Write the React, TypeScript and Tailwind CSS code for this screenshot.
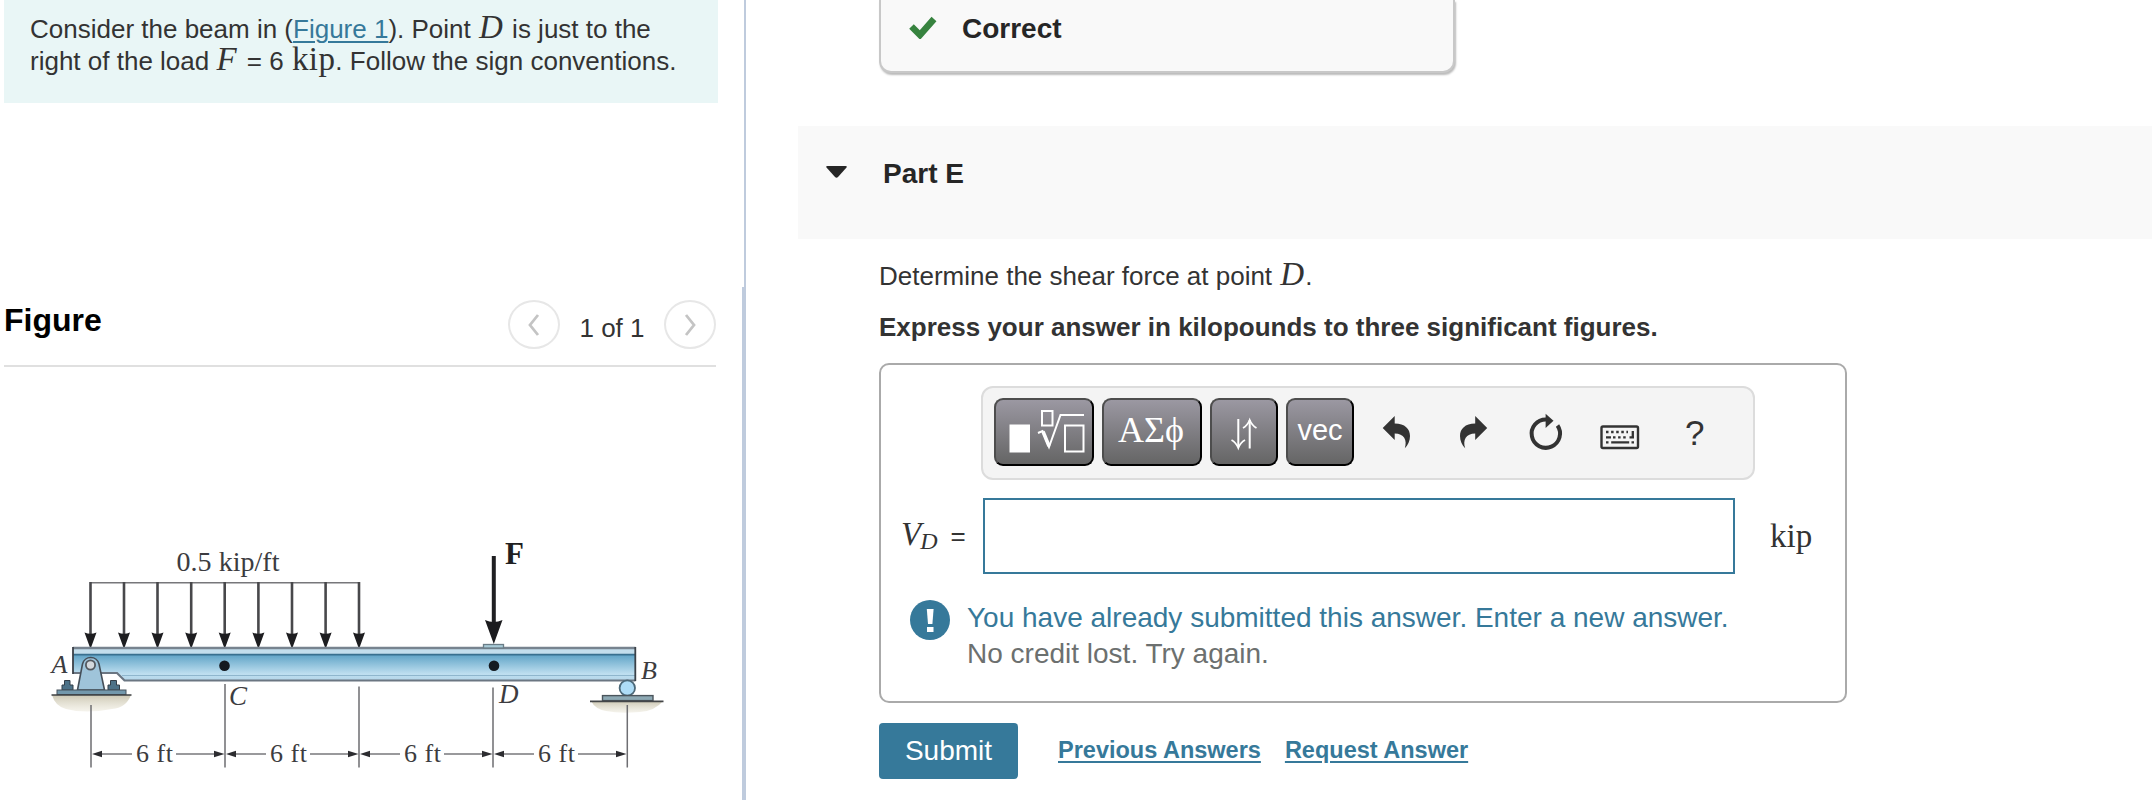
import React, { useState } from 'react';

const LOAD_ARROWS = [90.5, 124, 157.5, 191.2, 224.7, 258.4, 292, 325.6, 359];
const DIMENSIONS = [91, 225, 359, 493];

const MathText: React.FC<{ children: React.ReactNode; className?: string }> = ({ children, className = '' }) => (
  <span className={`font-['Liberation_Serif',serif] leading-[0] ${className}`}>{children}</span>
);

const BeamFigure: React.FC = () => (
  <svg
    width="700"
    height="270"
    viewBox="0 520 700 270"
    className="block font-['Liberation_Serif',serif]"
    fill="#3c3c40"
    fontSize="26"
  >
    <defs>
      <linearGradient id="web" x1="0" y1="0" x2="0" y2="1">
        <stop offset="0" stopColor="#5fa3c6" />
        <stop offset="0.75" stopColor="#bfdff0" />
        <stop offset="1" stopColor="#b4d6e9" />
      </linearGradient>
      <linearGradient id="ground" x1="0" y1="0" x2="0" y2="1">
        <stop offset="0" stopColor="#cdc8b4" />
        <stop offset="1" stopColor="#efece0" stopOpacity="0.6" />
      </linearGradient>
    </defs>

    {/* distributed load */}
    <text x="176.5" y="571" fontSize="28" textLength="103" lengthAdjust="spacing">0.5 kip/ft</text>
    <path d="M90.5 582.7H359" stroke="#77777a" strokeWidth="1.6" />
    {LOAD_ARROWS.map(x => (
      <g key={x}>
        <path d={`M${x} 582V636`} stroke="#48484b" strokeWidth="2.6" />
        <path d={`M${x - 6} 632.5Q${x} 635 ${x + 6} 632.5L${x} 649Z`} fill="#1d1d20" />
      </g>
    ))}

    {/* beam */}
    <path d="M73 654.5H635.5V680.5H124.5L117 673H73Z" fill="url(#web)" />
    <rect x="73" y="648" width="562.5" height="6.5" fill="#c3deec" />
    <path d="M73 648H635.5" stroke="#77838f" strokeWidth="2.4" />
    <path d="M73 654.7H635.5" stroke="#39708f" strokeWidth="1.8" />
    <path d="M122 675.5H635.5" stroke="#8fb6cd" strokeWidth="1.2" />
    <path d="M73 673H117L124.5 680.5H635.5" fill="none" stroke="#6b7682" strokeWidth="2.2" />
    <path d="M73 647V674M635.3 647V681" stroke="#3b4148" strokeWidth="1.8" />
    <circle cx="224.5" cy="665.7" r="5.3" fill="#151a20" />
    <circle cx="494" cy="665.7" r="5.3" fill="#151a20" />

    {/* pin support at A */}
    <path d="M52 695H131Q126 708 112 709Q85 714 66 709Q55 706 52 695Z" fill="url(#ground)" />
    <path d="M62 690V685H64.5V680.5H70V685H73V690ZM108 690V685H110.5V680.5H116.5V685H119.5V690Z" fill="#4d7288" stroke="#333e48" />
    <path d="M77.5 690L82.5 664A8.5 8.5 0 0 1 99 664L104.5 690Z" fill="#9fc4da" stroke="#454f59" strokeWidth="1.6" />
    <circle cx="90.5" cy="665" r="4.6" fill="#d4d8dc" stroke="#53585e" strokeWidth="1.8" />
    <rect x="57" y="690" width="69" height="4.5" fill="#7398ac" stroke="#47535d" />
    <path d="M51.5 695H131.5" stroke="#3f4245" strokeWidth="1.6" />

    {/* roller support at B */}
    <path d="M591 701H663Q655 711 640 712Q620 714 606 711Q595 709 591 701Z" fill="url(#ground)" />
    <circle cx="627.3" cy="688" r="7.7" fill="#aedcf6" stroke="#4c6878" strokeWidth="1.8" />
    <rect x="602.5" y="695.6" width="50.5" height="5" fill="#8da9b4" stroke="#4b555c" strokeWidth="1.4" />
    <path d="M590 701.3H663.5" stroke="#444648" strokeWidth="1.8" />

    {/* point load */}
    <rect x="483.5" y="644.5" width="20" height="3.5" fill="#a9cbd8" stroke="#6a7d87" strokeWidth="1.3" />
    <path d="M493.8 556V624" stroke="#1f1f22" strokeWidth="4" />
    <path d="M485 620Q493.8 624 502.5 620L493.8 644Z" fill="#1b1b1e" />
    <text x="505" y="563.5" fontSize="31" fontWeight="bold" fill="#1f1f22">F</text>

    <g fontStyle="italic">
      <text x="51.5" y="673.3">A</text>
      <text x="229" y="704.5" fontSize="27">C</text>
      <text x="499" y="702.8" fontSize="27">D</text>
      <text x="641" y="679">B</text>
    </g>

    {/* dimension lines */}
    <path d="M91 705V767.5M225 684V767.5M359 686.5V767.5M493 687.5V767.5M627.3 705V767.5" stroke="#6e6e72" strokeWidth="1.5" />
    {DIMENSIONS.map(x => (
      <g key={x}>
        <path d={`M${x + 6} 754H${x + 41}M${x + 85} 754H${x + 128}`} stroke="#78787c" strokeWidth="1.4" />
        <path d={`M${x + 1} 754L${x + 11} 750.8V757.2ZM${x + 133.5} 754L${x + 123} 750.8V757.2Z`} fill="#2c2c30" />
        <text x={x + 45} y="762" textLength="37" lengthAdjust="spacing">6 ft</text>
      </g>
    ))}
  </svg>
);

const PagerButton: React.FC<{ label: string; path: string }> = ({ label, path }) => (
  <button aria-label={label} className="flex h-[49px] w-[52px] items-center justify-center rounded-[50%] border-2 border-[#e7e7e7]">
    <svg width="14" height="22" viewBox="0 0 14 22" fill="none" stroke="#c4c4c4" strokeWidth="2.8">
      <path d={path} />
    </svg>
  </button>
);

const ToolButton: React.FC<{ children: React.ReactNode; wide?: boolean }> = ({ children, wide }) => (
  <button
    className={`flex h-[68px] items-center justify-center rounded-[9px] border-2 border-t-[#4d4d4d] border-l-[#4d4d4d] border-r-black border-b-black bg-linear-to-b from-[#9b98a2] to-[#656565] text-white ${
      wide ? 'w-[100px]' : 'w-[68px]'
    }`}
  >
    {children}
  </button>
);

const Toolbar: React.FC = () => (
  <div className="ml-[100px] flex h-[94px] w-[774px] rounded-[12px] border-2 border-[#dcdcdc] bg-[#f4f4f4] pt-[10px] pl-[11px]">
    <div className="flex gap-2">
      <ToolButton wide>
        <svg width="96" height="64" viewBox="996 400 96 64" fill="none" stroke="#fff" strokeWidth="2" className="shrink-0">
          <rect x="1009.5" y="424.5" width="20.5" height="28" fill="#fff" stroke="none" />
          <rect x="1042" y="411" width="10.5" height="14.5" />
          <path d="M1038 433L1042.5 431L1049 447L1060.5 415H1084" />
          <path d="M1043 431.5L1049 446" strokeWidth="3.5" />
          <rect x="1065" y="425.5" width="18.5" height="26" />
        </svg>
      </ToolButton>
      <ToolButton wide>
        <span className="pb-[4px] pr-[2px] font-['Liberation_Serif',serif] text-[36px] leading-none">ΑΣϕ</span>
      </ToolButton>
      <ToolButton>
        <svg width="64" height="64" viewBox="1212 400 64 64" fill="none" stroke="#fff" strokeWidth="2" className="shrink-0">
          <path d="M1238.3 419V447M1249.7 448.5V420" />
          <path d="M1231.5 440Q1236 442.5 1238.3 448Q1240.5 442.5 1245 440M1243 428Q1247.5 425.5 1249.7 420Q1252 425.5 1256.5 428" strokeWidth="1.8" />
        </svg>
      </ToolButton>
      <ToolButton>
        <span className="pb-1 text-[29px] leading-none">vec</span>
      </ToolButton>
    </div>
    <svg width="360" height="68" viewBox="1362 398 360 68" className="ml-2" fill="#333">
      <path d="M1382.7 428L1394.7 416V423.5C1405 423.5 1410 429 1410 436C1410 441 1408 445 1404.8 448.3C1407.5 440 1404 433.5 1394.7 433.5V440Z" />
      <path d="M1487.2 428L1475.2 416V423.5C1465 423.5 1460 429 1460 436C1460 441 1462 445 1465.2 448.3C1462.5 440 1466 433.5 1475.2 433.5V440Z" />
      <path d="M1546 419.4A14.2 14.2 0 1 0 1557.5 425.5" fill="none" stroke="#333" strokeWidth="4" />
      <path d="M1545.6 413.7L1553.5 420.7L1545.6 428Z" />
      <rect x="1601.5" y="426.5" width="36.5" height="21.5" rx="1.5" fill="none" stroke="#333" strokeWidth="2.4" />
      <path d="M1606 432H1628M1613 437.3H1628" fill="none" stroke="#333" strokeWidth="2.3" strokeDasharray="2.5 2.6" />
      <path d="M1606 437.3H1611M1606 442.3H1608.5M1611.2 442.3H1629.2M1631.5 442.3H1634M1632.8 431V438.4M1629.5 437.3H1634" fill="none" stroke="#333" strokeWidth="2.3" />
      <text x="1685" y="444.7" fontSize="35" className="font-['Liberation_Sans',sans-serif]">?</text>
    </svg>
  </div>
);

const ProblemPanel: React.FC = () => (
  <div className="flex h-[800px] w-[746px] shrink-0 flex-col">
    <div className="h-[287px] border-r-2 border-[#bfcbdd] pl-1">
      <div className="h-[103px] w-[714px] bg-[#e9f6f6] pt-[13px] pl-[26px] text-[26px] leading-[32px] whitespace-nowrap text-[#333]">
        <p>
          Consider the beam in (<a href="#figure" className="text-[#36799a] underline decoration-2 underline-offset-[3px]">Figure 1</a>). Point{' '}
          <MathText className="mr-[2px] ml-[1px] text-[33px] italic">D</MathText> is just to the
        </p>
        <p>
          right of the load <MathText className="mr-[3px] text-[33px] italic">F</MathText> = 6{' '}
          <MathText className="ml-[1px] text-[33px] tracking-[0.4px]">kip</MathText>. Follow the sign conventions.
        </p>
      </div>
    </div>
    <div className="flex-1 border-r-4 border-[#bfcbdd] pl-1">
      <div className="flex h-20 w-[712px] items-start justify-between border-b-2 border-[#e0e0e0] pt-[13px]">
        <h2 className="pt-[2px] text-[32px] leading-[36px] font-bold text-black">Figure</h2>
        <div className="flex items-center">
          <PagerButton label="Previous" path="M11 1L3 11L11 21" />
          <span className="w-[104px] pt-[7px] text-center text-[26px] leading-8 text-[#333]">1 of 1</span>
          <PagerButton label="Next" path="M3 1L11 11L3 21" />
        </div>
      </div>
      <div id="figure" className="-ml-1 pt-[153px]">
        <BeamFigure />
      </div>
    </div>
  </div>
);

const App: React.FC = () => {
  const [answer, setAnswer] = useState('');

  return (
    <div className="flex h-[800px] w-[2152px] overflow-hidden bg-white font-['Liberation_Sans',Arial,sans-serif] text-[#333]">
      <ProblemPanel />
      <main className="flex-1 pl-[52px]">
        <div className="ml-[81px] flex h-[73px] w-[576px] items-start rounded-b-[12px] border-2 border-t-0 border-[#c8c8c8] bg-[#f9f9f9] pt-[13px] pl-[27px] shadow-[1px_2px_2px_#bbb]">
          <svg width="30" height="24" viewBox="0 0 30 24" className="mt-[2px]">
            <path d="M3.5 11.5L12 20L26 4" fill="none" stroke="#37833f" strokeWidth="6.5" />
          </svg>
          <span className="ml-6 text-[28px] leading-8 font-bold text-[#262626]">Correct</span>
        </div>

        <div className="mt-[53px] flex h-[113px] items-start bg-[#f9f9f9] pt-[32px] pl-[28px]">
          <svg width="22" height="13" viewBox="0 0 22 13" className="mt-[8px]" fill="#262626">
            <path d="M1.5 0H19.5Q21.5 0 20.5 1.5L12 11Q10.5 12.5 9 11L0.5 1.5Q-0.5 0 1.5 0Z" />
          </svg>
          <h2 className="ml-[35px] text-[28px] leading-8 font-bold text-[#262626]">Part E</h2>
        </div>

        <div className="pl-[81px] text-[26px] whitespace-nowrap">
          <p className="pt-[21px] leading-8">
            Determine the shear force at point <MathText className="mr-[1px] ml-[1px] text-[33px] italic">D</MathText>.
          </p>
          <p className="mt-[19px] leading-8 font-bold">Express your answer in kilopounds to three significant figures.</p>

          <div className="mt-[20px] h-[340px] w-[968px] rounded-[10px] border-2 border-[#aaa] pt-[21px]">
            <Toolbar />
            <div className="mt-[18px] flex h-[76px] items-center">
              <div className="w-[102px] pl-[20px]">
                <MathText className="text-[33px] italic">V</MathText>
                <MathText className="relative top-1 -ml-[1px] text-[24px] italic">D</MathText>
                <span className="ml-[13px]">=</span>
              </div>
              <input
                aria-label="Shear force"
                value={answer}
                onChange={e => setAnswer(e.target.value)}
                className="h-[76px] w-[752px] border-2 border-[#36799a] bg-white px-3 outline-none"
              />
              <MathText className="ml-[35px] text-[33px]">kip</MathText>
            </div>
            <div className="mt-[26px] flex pl-[29px] text-[28px] leading-[36px]">
              <svg width="40" height="40" viewBox="0 0 40 40">
                <circle cx="20" cy="20" r="20" fill="#36799a" />
                <path d="M16.8 9H23.6L22.4 24H18Z" fill="#fff" />
                <rect x="17" y="27" width="6.5" height="5" fill="#fff" />
              </svg>
              <div className="ml-[17px]">
                <p className="text-[#36799a]">You have already submitted this answer. Enter a new answer.</p>
                <p className="text-[#6c706f]">No credit lost. Try again.</p>
              </div>
            </div>
          </div>

          <div className="mt-[20px] flex items-center">
            <button className="h-14 w-[139px] rounded-[4px] bg-[#36799a] text-[28px] text-white">Submit</button>
            <a href="#previous" className="ml-10 pb-[1px] text-[23.5px] font-bold text-[#36799a] underline decoration-2 underline-offset-[3px]">Previous Answers</a>
            <a href="#request" className="ml-6 pb-[1px] text-[23.5px] font-bold text-[#36799a] underline decoration-2 underline-offset-[3px]">Request Answer</a>
          </div>
        </div>
      </main>
    </div>
  );
};

export default App;
